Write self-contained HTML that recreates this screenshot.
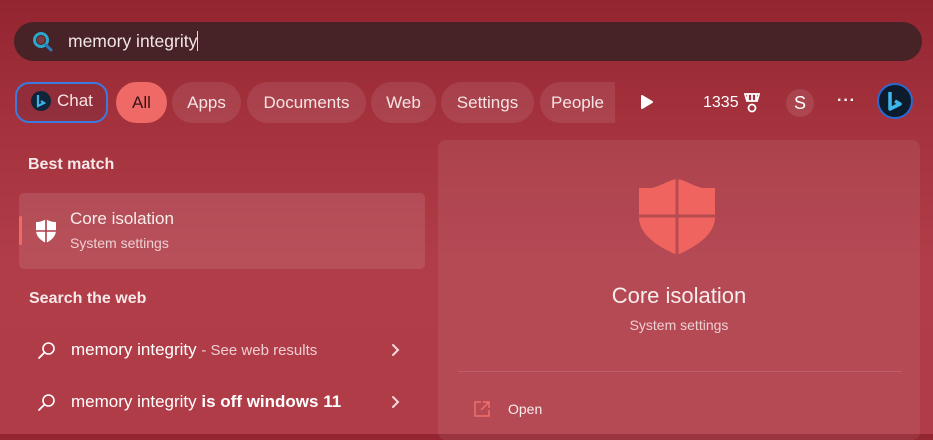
<!DOCTYPE html>
<html><head><meta charset="utf-8"><style>
*{margin:0;padding:0;box-sizing:border-box}
body{width:933px;height:434px;overflow:hidden;font-family:"Liberation Sans",sans-serif;color:#fff;
background:linear-gradient(180deg,#932530 0%,#a5333e 30%,#b03d48 60%,#b03c48 100%);position:relative}
.abs{position:absolute}
.search{left:14px;top:22px;width:908px;height:39px;border-radius:20px;background:#472226;}
.search .t{position:absolute;left:54px;top:9px;font-size:17.5px;color:#f3e6e7}
.chip{position:absolute;top:82px;height:41px;border-radius:21px;background:rgba(255,255,255,0.09);font-size:17px;line-height:41px;text-align:center;color:#f6e4e5}
.h{font-size:16px;font-weight:bold;color:#f7e8e9}
.sm{font-size:14px;color:#eecfd2}
</style></head><body>
<div class="abs search">
 <svg class="abs" style="left:18px;top:9px" width="22" height="22" viewBox="0 0 22 22"><circle cx="9" cy="9" r="6.5" fill="none" stroke="#2aa7c9" stroke-width="3"/><circle cx="9" cy="9" r="4" fill="#7a3a3e"/><path d="M14 14l5 5" stroke="#2b7bbf" stroke-width="3" stroke-linecap="round"/></svg>
 <div class="t">memory integrity<span style="display:inline-block;width:1px;height:20px;background:#ddd;vertical-align:-4px"></span></div>
</div>
<div class="chip" style="left:15px;width:93px;border:2px solid #3b7be0;background:rgba(60,40,60,0.15);line-height:37px;border-radius:14px;height:41px"></div>
<svg class="abs" style="left:30px;top:90px" width="22" height="24" viewBox="0 0 22 24"><circle cx="11" cy="11" r="10" fill="#10253a"/><path d="M8 5v11l6-3-3-2" fill="none" stroke="#3db4e8" stroke-width="2.2"/></svg>
<div class="abs" style="left:57px;top:91px;font-size:17px;color:#f6e4e5">Chat</div>
<div class="chip" style="left:116px;width:51px;background:#ef6a66;color:#3a1214">All</div>
<div class="chip" style="left:172px;width:69px">Apps</div>
<div class="chip" style="left:247px;width:119px">Documents</div>
<div class="chip" style="left:371px;width:65px">Web</div>
<div class="chip" style="left:441px;width:93px">Settings</div>
<div class="chip" style="left:540px;width:75px;border-radius:21px 0 0 21px">People</div>
<svg class="abs" style="left:640px;top:94px" width="14" height="16"><path d="M2 2l10 6-10 6z" fill="#fff" stroke="#fff" stroke-linejoin="round" stroke-width="2"/></svg>
<div class="abs" style="left:703px;top:94px;font-size:16px">1335</div>
<svg class="abs" style="left:743px;top:92px" width="18" height="22" viewBox="0 0 18 22"><path d="M2 2h14l-2 7h-10z M5 2v7M9 2v7M13 2v7" fill="none" stroke="#fff" stroke-width="1.8"/><circle cx="9" cy="16" r="3.5" fill="none" stroke="#fff" stroke-width="1.8"/></svg>
<div class="abs" style="left:786px;top:89px;width:28px;height:28px;border-radius:50%;background:rgba(255,255,255,0.1);font-size:18px;text-align:center;line-height:28px">S</div>
<div class="abs" style="left:837px;top:92px;font-size:16px;letter-spacing:1px;font-weight:bold">···</div>
<svg class="abs" style="left:876px;top:83px" width="38" height="38" viewBox="0 0 38 38"><circle cx="19" cy="18" r="17" fill="#0d1c2c" stroke="#2a6ad0" stroke-width="2"/><path d="M14 9v17l10-5-5-3" fill="none" stroke="#3fb6ea" stroke-width="3.5" stroke-linejoin="round"/></svg>

<div class="abs h" style="left:28px;top:156px">Best match</div>
<div class="abs" style="left:19px;top:193px;width:406px;height:76px;border-radius:5px;background:rgba(255,255,255,0.1)"></div>
<div class="abs" style="left:19px;top:216px;width:3px;height:29px;border-radius:2px;background:#ef6a66"></div>
<svg class="abs" style="left:33px;top:218px" width="26" height="26" viewBox="0 0 26 26"><path d="M13 1c3 2 6 3 10 3v8c0 6-4 10-10 13C7 22 3 18 3 12V4c4 0 7-1 10-3z" fill="#fff"/><path d="M13 1v25M3 13h20" stroke="#b03c48" stroke-width="1.6"/></svg>
<div class="abs" style="left:70px;top:209px;font-size:17px;color:#f8eced">Core isolation</div>
<div class="abs sm" style="left:70px;top:235px">System settings</div>
<div class="abs h" style="left:29px;top:290px">Search the web</div>
<svg class="abs" style="left:37px;top:341px" width="20" height="20"><circle cx="11.5" cy="7.5" r="5.5" fill="none" stroke="#fff" stroke-width="1.6"/><path d="M7.5 11.5L2 17" stroke="#fff" stroke-width="1.8" stroke-linecap="round"/></svg>
<div class="abs" style="left:71px;top:340px;font-size:17px">memory integrity <span class="sm" style="font-size:15px">- See web results</span></div>
<svg class="abs" style="left:391px;top:343px" width="10" height="14"><path d="M2 2l5 5-5 5" fill="none" stroke="#f3d9db" stroke-width="2" stroke-linecap="round"/></svg>
<svg class="abs" style="left:37px;top:393px" width="20" height="20"><circle cx="11.5" cy="7.5" r="5.5" fill="none" stroke="#fff" stroke-width="1.6"/><path d="M7.5 11.5L2 17" stroke="#fff" stroke-width="1.8" stroke-linecap="round"/></svg>
<div class="abs" style="left:71px;top:392px;font-size:17px">memory integrity <b>is off windows 11</b></div>
<svg class="abs" style="left:391px;top:395px" width="10" height="14"><path d="M2 2l5 5-5 5" fill="none" stroke="#f3d9db" stroke-width="2" stroke-linecap="round"/></svg>

<div class="abs" style="left:438px;top:140px;width:482px;height:300px;border-radius:8px;background:rgba(255,255,255,0.07)"></div>
<svg class="abs" style="left:638px;top:179px" width="78" height="78" viewBox="0 0 78 78"><path d="M39 0c-8 1-14 6-25 9H1v29c0 16 15 28 38 38 23-10 38-22 38-38V9h-13C53 6 47 1 39 0z" fill="#f0645f"/><path d="M39 0v78M0 37h78" stroke="#b84a52" stroke-width="3"/></svg>
<div class="abs" style="left:438px;top:283px;width:482px;text-align:center;font-size:22px;color:#f8eced">Core isolation</div>
<div class="abs sm" style="left:438px;top:317px;width:482px;text-align:center">System settings</div>
<div class="abs" style="left:458px;top:371px;width:444px;height:1px;background:rgba(255,255,255,0.12)"></div>
<svg class="abs" style="left:473px;top:400px" width="18" height="18"><path d="M8 2H2v14h14v-6M10 2h6v6M16 2l-8 8" fill="none" stroke="#f0706b" stroke-width="1.5"/></svg>
<div class="abs" style="left:508px;top:401px;font-size:14px;color:#f8eced">Open</div>
</body></html>
